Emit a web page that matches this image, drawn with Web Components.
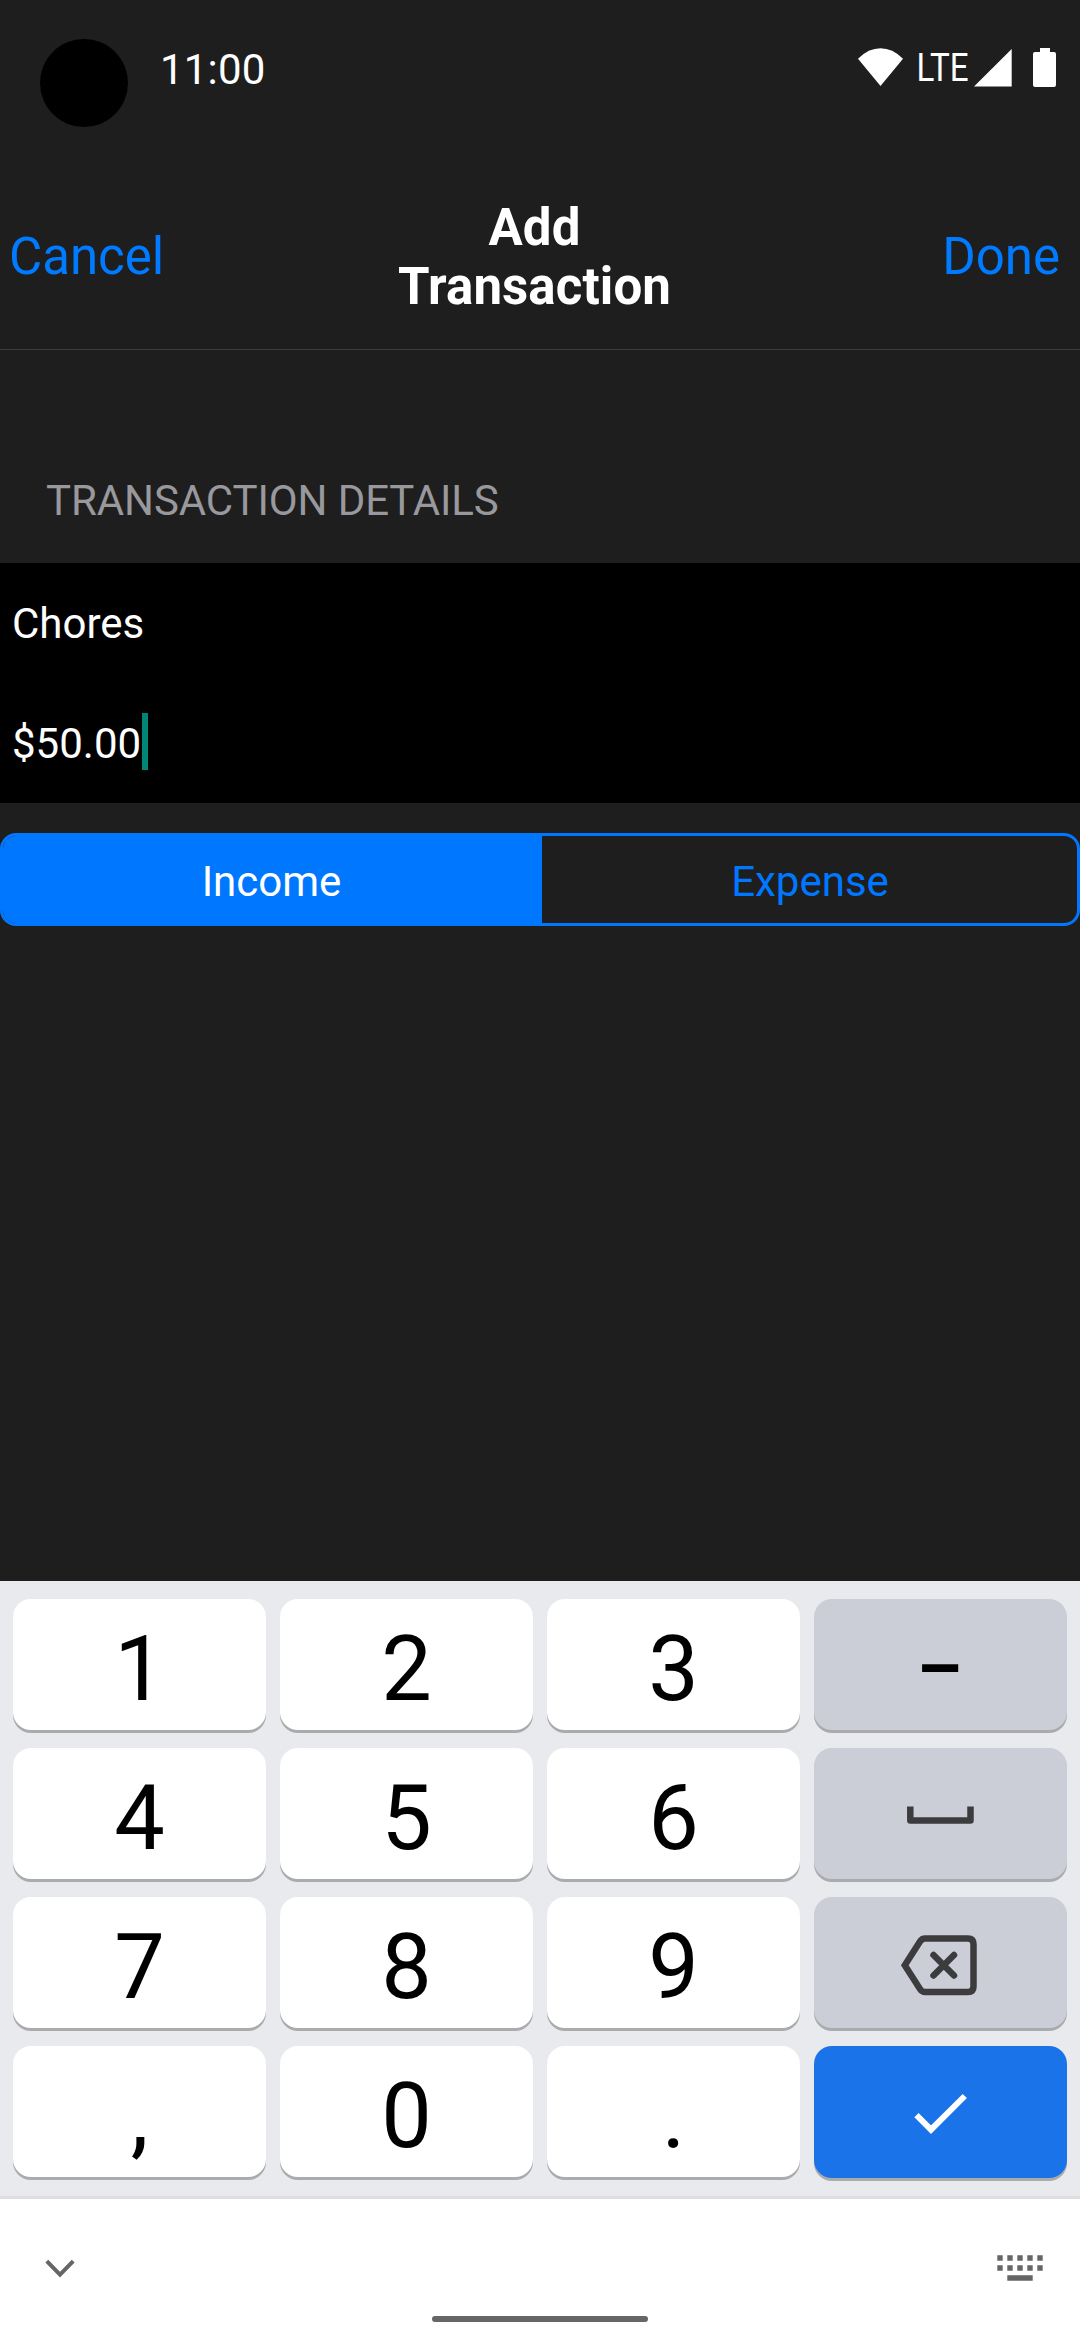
<!DOCTYPE html>
<html lang="en">
<head>
<meta charset="utf-8">
<title>Add Transaction</title>
<style>
html,body{margin:0;padding:0;background:#1e1e1e}
body{width:1080px;height:2340px;overflow:hidden;font-family:Roboto,"Liberation Sans",sans-serif}
</style>
</head>
<body>
<transaction-screen></transaction-screen>
<script>
const define = (name, html) => {
  const tpl = document.createElement('template');
  tpl.innerHTML = html;
  customElements.define(name, class extends HTMLElement {
    constructor() {
      super();
      this.attachShadow({ mode: 'open' }).appendChild(tpl.content.cloneNode(true));
    }
  });
};

define('status-bar', `
<style>
:host{display:flex;height:164px;box-sizing:border-box;padding:39px 24px 0 40px;color:#fff;align-items:flex-start}
.camera{width:88px;height:88px;border-radius:50%;background:#000}
.time{font-size:42px;line-height:62px;margin-left:32px;letter-spacing:.2px}
.icons{margin-left:auto;display:block}
text{font-family:Roboto,"Liberation Sans",sans-serif}
</style>
<div class="camera"></div>
<div class="time">11:00</div>
<svg class="icons" width="198" height="60" viewBox="858 39 198 60" fill="#fff">
  <path d="M858 58.7Q868.500 48.300 880.500 48.300T903 58.700L880.500 86Z"/>
  <text x="916.500" y="81" font-size="38" font-weight="400" textLength="52" lengthAdjust="spacingAndGlyphs">LTE</text>
  <path d="M974 86.500H1011.700V49Z"/>
  <path d="M1040 48h10v4h4q2 0 2 2v31q0 2-2 2h-19q-2 0-2-2v-31q0-2 2-2h5z"/>
</svg>`);

define('nav-header', `
<style>
:host{display:grid;grid-template-columns:1fr 300px 1fr;align-items:center;height:185px;padding:0 20px 0 9px;border-bottom:1px solid #3d3d3f;font-size:51px;line-height:59px;color:#007aff}
.title{color:#fff;font-weight:700;text-align:center;letter-spacing:.1px}
.right{text-align:right}
</style>
<div><slot name="left"></slot></div>
<div class="title"><slot></slot></div>
<div class="right"><slot name="right"></slot></div>`);

define('section-title', `
<style>
:host{display:flex;align-items:flex-end;height:213px;box-sizing:border-box;padding:0 46px 37px;font-size:42px;line-height:50px;color:#98989d;letter-spacing:-.1px}
</style><slot></slot>`);

define('text-row', `
<style>
:host{display:flex;align-items:center;height:120px;padding-left:12px;background:#000;color:#fff;font-size:42px;line-height:57px}
:host([focused])::after{content:"";width:6px;height:57px;background:#008577;margin:-3px 0 0 1px}
</style><slot></slot>`);

define('segmented-control', `
<style>
:host{display:flex;height:93px;margin-top:30px;box-sizing:border-box;border:3px solid #0077ff;border-radius:16px;overflow:hidden;font-size:42px;color:#0077ff}
div{flex:1;display:flex;align-items:center;justify-content:center;padding:4px 0 0 1px;box-sizing:border-box}
.on{background:#0077ff;color:#fff;flex:0 0 539px;padding:4px 2px 0 0}
</style>
<div class="on"><slot name="on"></slot></div><div><slot name="off"></slot></div>`);

define('key-cap', `
<style>
:host{display:flex;align-items:center;justify-content:center;height:131px;border-radius:18px;background:#fff;box-shadow:0 3px 0 #a9abac;color:#000;font-size:90px;line-height:141px}
:host([tone=grey]){background:#cbced6}
:host([tone=blue]){background:#1a73e8;height:132px}
span{display:block;height:131px}
::slotted(svg){display:block}
::slotted(b){display:block;font-weight:400;transform:scale(.82,1.15)}
</style><span><slot></slot></span>`);

define('num-pad', `
<style>
:host{display:grid;grid-template-columns:repeat(4,253px);column-gap:14px;grid-auto-rows:131px;row-gap:18px;padding:18px 13px;height:579px;background:#e8eaed;border-bottom:3px solid #dfdfdf}
</style>
<key-cap>1</key-cap><key-cap>2</key-cap><key-cap>3</key-cap><key-cap tone="grey"><b>–</b></key-cap>
<key-cap>4</key-cap><key-cap>5</key-cap><key-cap>6</key-cap>
<key-cap tone="grey"><svg width="253" height="131" viewBox="814 1748 253 131" fill="none" stroke="#3c3c3e" stroke-width="6.500" stroke-linejoin="round"><path d="M910.300 1806.500V1820.500H970.500V1806.500"/></svg></key-cap>
<key-cap>7</key-cap><key-cap>8</key-cap><key-cap>9</key-cap>
<key-cap tone="grey"><svg width="253" height="131" viewBox="814 1897 253 131" fill="none" stroke="#3c3c3e" stroke-width="6.500"><path d="M904.800 1965.200L920 1941.500Q922 1938.500 925 1938.500H968Q973.500 1938.500 973.500 1944V1986.500Q973.500 1992 968 1992H925Q922 1992 920 1989Z"/><path stroke-linecap="round" d="M933.500 1955L954 1975.500M954 1955L933.500 1975.500"/></svg></key-cap>
<key-cap>,</key-cap><key-cap>0</key-cap><key-cap>.</key-cap>
<key-cap tone="blue"><svg width="253" height="132" viewBox="814 2046 253 132" fill="none" stroke="#fff" stroke-width="6"><path d="M916.500 2114.200L931 2128.700L964.800 2095"/></svg></key-cap>`);

define('keyboard-footer', `
<style>
:host{display:flex;flex-direction:column;height:141px;background:#fff}
.tools{display:flex;justify-content:space-between;height:117px;padding:56px 37px 0 45px;box-sizing:border-box}
.pill{width:216px;height:6px;border-radius:3px;background:#666;align-self:center}
</style>
<div class="tools">
<svg width="30" height="26" viewBox="45 2255 30 26" fill="none" stroke="#666" stroke-width="4"><path d="M46.800 2261.200L60 2274.700L73.200 2261.200"/></svg>
<svg width="46" height="26" viewBox="997 2255 46 26" fill="#666"><path d="M997.300 2255.300h5.400v5.400h-5.400zm10 0h5.400v5.400h-5.400zm10 0h5.400v5.400h-5.400zm10 0h5.400v5.400h-5.400zm10 0h5.400v5.400h-5.400zM997.300 2265.300h5.400v5.400h-5.400zm10 0h5.400v5.400h-5.400zm10 0h5.400v5.400h-5.400zm10 0h5.400v5.400h-5.400zm10 0h5.400v5.400h-5.400zM1007.300 2275.300h25.400v5.400h-25.400z"/></svg>
</div>
<div class="pill"></div>`);

define('transaction-screen', `
<style>
:host{display:flex;flex-direction:column;width:1080px;height:2340px;background:#1e1e1e}
.fill{flex:1}
</style>
<status-bar></status-bar>
<nav-header><span slot="left">Cancel</span>Add<br>Transaction<span slot="right">Done</span></nav-header>
<section-title>TRANSACTION DETAILS</section-title>
<text-row>Chores</text-row>
<text-row focused>$50.00</text-row>
<segmented-control><span slot="on">Income</span><span slot="off">Expense</span></segmented-control>
<div class="fill"></div>
<num-pad></num-pad>
<keyboard-footer></keyboard-footer>`);
</script>
</body>
</html>
